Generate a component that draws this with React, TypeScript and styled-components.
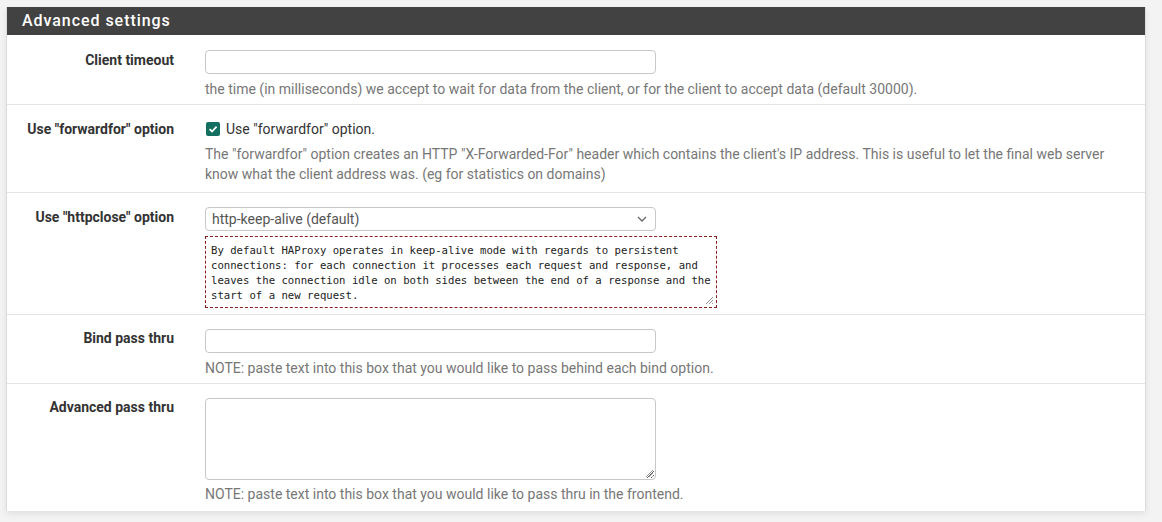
import React from "react";
import styled, { createGlobalStyle } from "styled-components";

const Global = createGlobalStyle`
  html, body { margin: 0; padding: 0; background: #f3f3f3; }
  body { font-family: Roboto, "Liberation Sans", Arial, sans-serif; font-size: 14px; color: #333; }
  * { box-sizing: border-box; }
`;

const Page = styled.div`
  padding: 7px 16px 0 6px;
  height: 522px;
  overflow: hidden;
`;

const Panel = styled.section`
  width: 1140px;
  background: #fff;
  border-left: 1px solid #dcdcdc;
  border-right: 1px solid #dcdcdc;
  box-shadow: 0 3px 6px rgba(0, 0, 0, 0.08);
`;

const Header = styled.h2`
  margin: 0;
  height: 28px;
  background: #424242;
  color: #fff;
  font-size: 16px;
  font-weight: 500;
  letter-spacing: 0.95px;
  line-height: 28px;
  padding-left: 15px;
`;

const Row = styled.div<{ $h: number }>`
  display: grid;
  grid-template-columns: 182px 1fr;
  height: ${(p) => p.$h}px;
  border-bottom: 1px solid #e4e4e4;
  &:last-child { border-bottom: none; }
`;

const Label = styled.div<{ $pt: number }>`
  text-align: right;
  padding: ${(p) => p.$pt}px 15px 0 0;
  font-weight: 700;
  font-size: 14px;
  line-height: 18px;
  color: #333;
`;

const Field = styled.div<{ $pt: number }>`
  padding: ${(p) => p.$pt}px 0 0 16px;
  width: 936px;
`;

const TextInput = styled.input`
  display: block;
  width: 451px;
  height: 24px;
  border: 1px solid #c8c8c8;
  border-radius: 4px;
  background: #fff;
  margin: 0;
`;

const Area = styled.textarea<{ $h: number }>`
  display: block;
  width: 451px;
  height: ${(p) => p.$h}px;
  border: 1px solid #c8c8c8;
  border-radius: 4px;
  background: #fff;
  margin: 0;
`;

const Help = styled.div<{ $mt: number }>`
  margin-top: ${(p) => p.$mt}px;
  color: #777;
  font-size: 14px;
  line-height: 20px;
`;

const CheckLine = styled.label`
  display: flex;
  align-items: center;
  gap: 6px;
  height: 18px;
  margin-top: 1px;
  font-size: 14px;
  color: #333;
`;

const Box = styled.span`
  width: 14px;
  height: 14px;
  border-radius: 2px;
  background: #136f5f;
  display: inline-flex;
  align-items: center;
  justify-content: center;
  margin-left: 1px;
`;

const Select = styled.div`
  width: 451px;
  height: 24px;
  border: 1px solid #c8c8c8;
  border-radius: 4px;
  display: flex;
  align-items: center;
  justify-content: space-between;
  padding: 0 8px 0 6px;
  color: #555;
  font-size: 14px;
`;

const Info = styled.div`
  position: relative;
  margin-top: 5px;
  width: 512px;
  height: 72px;
  border: 1px dashed #8b1c1c;
  padding: 6px 5px 0 5px;
  font-family: "DejaVu Sans Mono", "Liberation Mono", monospace;
  font-size: 10.65px;
  line-height: 15px;
  color: #222;
  white-space: pre;
`;

const Grip = styled.svg`
  position: absolute;
  right: 2px;
  bottom: 2px;
`;

const AreaWrap = styled.div`
  position: relative;
  width: 451px;
`;

const GripIcon = () => (
  <Grip width="9" height="9" viewBox="0 0 9 9">
    <path d="M8 1L1 8M8 4L4 8M8 7L7 8" stroke="#999" strokeWidth="1" />
  </Grip>
);

export default function App() {
  return (
    <>
      <Global />
      <Page>
        <Panel>
          <Header>Advanced settings</Header>
          <Row $h={70}>
            <Label $pt={16}>Client timeout</Label>
            <Field $pt={15}>
              <TextInput />
              <Help $mt={5}>
                the time (in milliseconds) we accept to wait for data from the client, or for the client to accept data (default 30000).
              </Help>
            </Field>
          </Row>
          <Row $h={88}>
            <Label $pt={15}>Use "forwardfor" option</Label>
            <Field $pt={14}>
              <CheckLine>
                <Box>
                  <svg width="10" height="10" viewBox="0 0 10 10">
                    <path d="M1.6 5.2L4 7.5L8.6 2.6" stroke="#fff" strokeWidth="1.8" fill="none" />
                  </svg>
                </Box>
                Use "forwardfor" option.
              </CheckLine>
              <Help $mt={6}>
                The "forwardfor" option creates an HTTP "X-Forwarded-For" header which contains the client's IP address. This is useful to let the final web server know what the client address was. (eg for statistics on domains)
              </Help>
            </Field>
          </Row>
          <Row $h={122}>
            <Label $pt={15}>Use "httpclose" option</Label>
            <Field $pt={14}>
              <Select>
                <span>http-keep-alive (default)</span>
                <svg width="10" height="6" viewBox="0 0 10 6">
                  <path d="M1 1L5 5L9 1" stroke="#666" strokeWidth="1.3" fill="none" />
                </svg>
              </Select>
              <Info>
                {"By default HAProxy operates in keep-alive mode with regards to persistent\nconnections: for each connection it processes each request and response, and\nleaves the connection idle on both sides between the end of a response and the\nstart of a new request."}
                <GripIcon />
              </Info>
            </Field>
          </Row>
          <Row $h={69}>
            <Label $pt={14}>Bind pass thru</Label>
            <Field $pt={14}>
              <TextInput />
              <Help $mt={5}>NOTE: paste text into this box that you would like to pass behind each bind option.</Help>
            </Field>
          </Row>
          <Row $h={127}>
            <Label $pt={14}>Advanced pass thru</Label>
            <Field $pt={14}>
              <AreaWrap>
                <Area $h={82} />
                <GripIcon />
              </AreaWrap>
              <Help $mt={4}>NOTE: paste text into this box that you would like to pass thru in the frontend.</Help>
            </Field>
          </Row>
        </Panel>
      </Page>
    </>
  );
}
